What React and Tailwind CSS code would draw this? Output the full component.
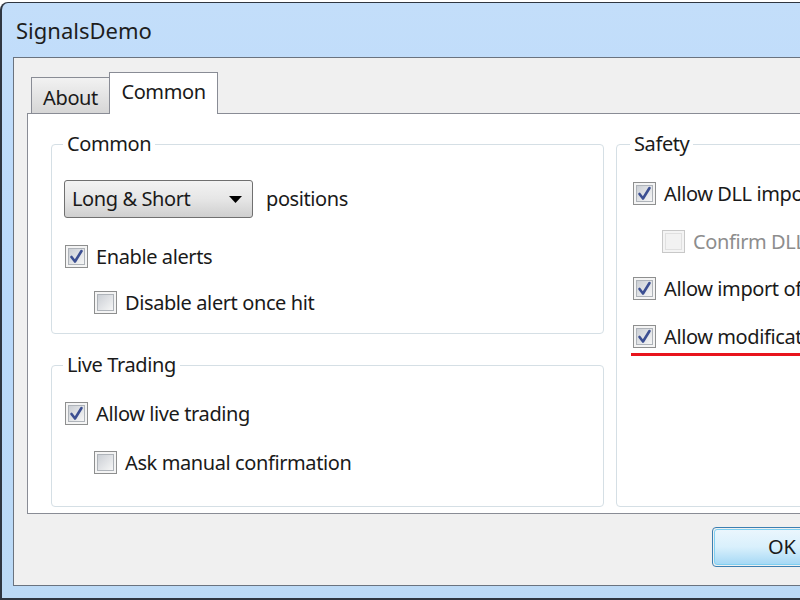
import React from "react";

const font = { fontFamily: '"Noto Sans", "Open Sans", sans-serif' };

function Check({ checked, disabled }) {
  return (
    <div
      className={
        "w-[23px] h-[23px] shrink-0 border p-[2px] " +
        (disabled ? "border-[#c8c8c8] bg-[#f4f4f4]" : "border-[#8e8f8f] bg-[#f4f4f4]")
      }
    >
      <div
        className={
          "relative w-full h-full border " +
          (disabled
            ? "border-[#e0e0e0] bg-[#f2f2f2]"
            : "border-[#aeb3b9] bg-gradient-to-br from-[#cbcfd5] to-[#f6f6f6]")
        }
      >
        {checked && (
          <svg viewBox="0 0 17 17" className="absolute -left-[1px] -top-[1px] w-[17px] h-[17px]">
            <path
              d="M3.5 9 L7 13.5 L13.5 3"
              fill="none"
              stroke="#3c4f92"
              strokeWidth="2.6"
              strokeLinecap="round"
              strokeLinejoin="round"
            />
          </svg>
        )}
      </div>
    </div>
  );
}

function Row({ checked, disabled, children, className }) {
  return (
    <div className={"flex items-center h-[23px] gap-[8px] " + (className || "")}>
      <Check checked={checked} disabled={disabled} />
      <span
        className={
          "text-[20px] tracking-[-0.4px] leading-none whitespace-nowrap " +
          (disabled ? "text-[#8d8d8d]" : "text-[#1a1a1a]")
        }
      >
        {children}
      </span>
    </div>
  );
}

function Group({ title, className, innerClass, legendClass, children }) {
  return (
    <fieldset className={"min-w-0 border border-[#d5dfe5] rounded-[4px] " + (className || "")}>
      <legend
        className={
          "px-[4px] text-[20px] tracking-[-0.4px] leading-[26px] text-[#1a1a1a] " + (legendClass || "ml-[11px]")
        }
      >
        {title}
      </legend>
      <div className={innerClass}>{children}</div>
    </fieldset>
  );
}

export default function App() {
  return (
    <div className="w-[800px] h-[600px] overflow-hidden bg-white" style={font}>
      <div className="mt-[2px] w-[1100px] h-[598px] flex flex-col rounded-tl-[8px] border-t border-l-2 border-b-2 border-[#2f3641] bg-gradient-to-b from-[#c3defa] via-[#b9d9fb] to-[#bcdaf6] pl-[11px]">
        <div className="h-[54px] shrink-0 flex items-center pl-[3px] text-[22px] text-[#1e1e1e]">SignalsDemo</div>
        <div className="h-[529px] shrink-0 border border-[#6a737f] bg-[#f0f0f0] pt-[15px] pl-[13px]">
          <div className="flex items-end h-[40px] pl-[4px]">
            <div className="h-[36px] w-[79px] border border-b-0 border-[#898c95] bg-gradient-to-b from-[#f2f2f2] to-[#d6d6d6] flex items-center justify-center text-[20px] tracking-[-0.4px] text-[#1a1a1a] leading-none pt-[4px]">
              About
            </div>
            <div className="relative z-10 -mb-px h-[42px] w-[109px] border border-b-0 border-[#898c95] -ml-px bg-white flex items-center justify-center text-[20px] tracking-[-0.4px] text-[#1a1a1a] leading-none pb-[4px]">
              Common
            </div>
          </div>
          <div className="h-[401px] border border-[#898c95] bg-white pt-[17px] pl-[23px] flex gap-[12px] items-stretch">
            <div className="w-[553px] shrink-0 flex flex-col gap-[18px]">
              <Group title="Common" innerClass="pl-[12px] pb-[19px]">
                <div className="flex items-center gap-[13px] mt-[23px]">
                  <div className="w-[189px] h-[38px] rounded-[3px] border border-[#707070] bg-gradient-to-b from-[#f3f3f3] via-[#e6e6e6] to-[#cfcfcf] flex items-center pl-[7px] pr-[10px]">
                    <span className="text-[20px] tracking-[-0.4px] leading-none text-[#1a1a1a] flex-1">Long &amp; Short</span>
                    <svg width="13" height="7" viewBox="0 0 13 7">
                      <path d="M0 0 L13 0 L6.5 7 Z" fill="#000" />
                    </svg>
                  </div>
                  <span className="text-[20px] tracking-[-0.4px] leading-none text-[#1a1a1a]">positions</span>
                </div>
                <Row checked className="mt-[27px] ml-[1px]">Enable alerts</Row>
                <Row className="mt-[23px] ml-[30px]">Disable alert once hit</Row>
              </Group>
              <Group title="Live Trading" innerClass="pl-[13px] pb-[32px]">
                <Row checked className="mt-[24px]">Allow live trading</Row>
                <Row className="mt-[26px] ml-[29px]">Ask manual confirmation</Row>
              </Group>
            </div>
            <Group
              title="Safety"
              className="w-[420px] shrink-0 mb-[6px]"
              legendClass="ml-[13px]"
              innerClass="pl-[16px]"
            >
              <Row checked className="mt-[25px]">Allow DLL imports</Row>
              <Row disabled className="mt-[25px] ml-[29px]">Confirm DLL function calls</Row>
              <Row checked className="mt-[24px]">Allow import of external experts</Row>
              <Row checked className="mt-[25px]">Allow modification of Signals settings</Row>
              <div className="mt-[5px] -ml-[2px] h-[3px] bg-[#e8141c]" />
            </Group>
          </div>
          <div className="flex mt-[13px] pl-[685px]">
            <div className="h-[40px] w-[160px] rounded-[4px] border border-[#3c7fb1] p-px">
              <div className="h-full w-full rounded-[3px] border border-[#7fd0f2] bg-gradient-to-b from-[#eaf6fd] via-[#d9f0fc] to-[#a7d9f5] flex items-center pl-[53px] text-[20px] leading-none text-[#1a1a1a]">
                OK
              </div>
            </div>
          </div>
        </div>
      </div>
    </div>
  );
}
